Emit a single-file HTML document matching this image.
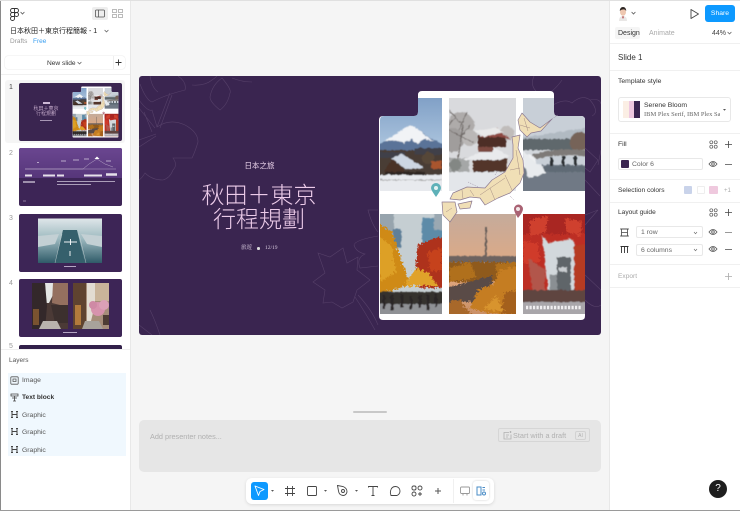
<!DOCTYPE html>
<html><head><meta charset="utf-8"><style>
html,body{margin:0;padding:0;background:#f5f5f5}
#r{position:relative;width:740px;height:511px;overflow:hidden;background:#f5f5f5;font-family:"Liberation Sans","Noto Sans CJK TC",sans-serif;color:#333}
.t{position:absolute;white-space:nowrap;font-size:6.800px;line-height:10px;color:#333;margin-top:1px}
.p{position:absolute;background:#fff}
.l{position:absolute;background:#e8e8e8;height:1px}
svg{position:absolute;display:block}
.th{position:absolute;left:19px;width:103px;height:58px;border-radius:2px;overflow:hidden;background:#3a2550}
.n{position:absolute;left:9px;font-size:7px;color:#999;line-height:10px}
</style></head><body><div id="r">

<svg width="0" height="0" style="position:absolute">
<defs>
<filter id="b" x="-10%" y="-10%" width="120%" height="120%"><feTurbulence type="fractalNoise" baseFrequency=".3" numOctaves="2" seed="3" result="n"/><feDisplacementMap in="SourceGraphic" in2="n" scale="3" xChannelSelector="R" yChannelSelector="G"/><feGaussianBlur stdDeviation=".4"/></filter>
<filter id="f" x="-10%" y="-10%" width="120%" height="120%"><feTurbulence type="fractalNoise" baseFrequency=".45" numOctaves="3" seed="8" result="n"/><feDisplacementMap in="SourceGraphic" in2="n" scale="7" xChannelSelector="R" yChannelSelector="G"/><feGaussianBlur stdDeviation=".35"/></filter>
<linearGradient id="sky1" x1="0" y1="0" x2="0" y2="1"><stop offset="0" stop-color="#7f9fc6"/><stop offset=".5" stop-color="#a9c2dc"/><stop offset="1" stop-color="#c8d6e3"/></linearGradient>
<linearGradient id="dusk" x1="0" y1="0" x2="0" y2="1"><stop offset="0" stop-color="#c4ab9c"/><stop offset=".6" stop-color="#e2a981"/><stop offset="1" stop-color="#c98f66"/></linearGradient>
<linearGradient id="rw" x1="0" y1="0" x2="0" y2="1"><stop offset="0" stop-color="#dfe6e9"/><stop offset=".45" stop-color="#9dbac0"/><stop offset="1" stop-color="#2f5a68"/></linearGradient>
<clipPath id="cp1"><path d="M380 191V120Q380 116 384 116H414Q418 116 418 112V98H442V191Z"/></clipPath>
<clipPath id="cp2"><rect x="449" y="98" width="67" height="93"/></clipPath>
<clipPath id="cp3"><path d="M523 98H554V112Q554 116 558 116H581Q585 116 585 120V191H523Z"/></clipPath>
<clipPath id="cp4"><rect x="380" y="214" width="62" height="100"/></clipPath>
<clipPath id="cp5"><rect x="449" y="214" width="67" height="100"/></clipPath>
<clipPath id="cp6"><rect x="523" y="214" width="62" height="100"/></clipPath>
<symbol id="col" viewBox="139 76 462 259">
<path d="M379 120Q379 116 383 116H414Q418 116 418 112V95Q418 91 422 91H550Q554 91 554 95V112Q554 116 558 116H581Q585 116 585 120V316Q585 320 581 320H383Q379 320 379 316Z" fill="#fff"/>
<g clip-path="url(#cp1)"><rect x="378" y="96" width="66" height="97" fill="url(#sky1)"/><g filter="url(#b)">
<path d="M376 146L395 136 406 127 411 125 418 129 428 137 446 146V158H376Z" fill="#5a7398"/>
<path d="M384 141L396 134 406 127 411 125 418 129 427 137 434 141 424 139 418 144 412 139 404 143 398 140Z" fill="#f1f3f6"/>
<rect x="376" y="150" width="70" height="27" fill="#4a3d36"/>
<path d="M376 152H405V158H376ZM414 148H446V155H414Z" fill="#3f3f48"/>
<circle cx="428" cy="158" r="6" fill="#574638"/>
<rect x="431" y="161" width="11" height="8" fill="#a9552e"/>
<path d="M391 158L402 154 424 168 405 169Z" fill="#cdd6e2"/>
<path d="M385 170L392 159 404 170V173H385Z" fill="#4a3227"/>
<rect x="376" y="175" width="70" height="20" fill="#e8eaee"/>
<path d="M380 180H442" stroke="#9a9a9a" stroke-width=".7"/>
<path d="M385 172H425V175H385Z" fill="#2f2622"/>
</g></g>
<g clip-path="url(#cp2)"><rect x="447" y="96" width="71" height="97" fill="#d9dadd"/><g filter="url(#b)">
<rect x="447" y="172" width="71" height="23" fill="#e3e6ea"/>
<circle cx="461" cy="125" r="13" fill="#aeabaa"/>
<circle cx="452" cy="140" r="12" fill="#a09d9c"/>
<circle cx="470" cy="138" r="8" fill="#bab7b6"/>
<circle cx="507" cy="133" r="7" fill="#c0bcba"/>
<path d="M449 110L463 125 458 160M467 112L459 130M449 130L474 143M455 118L449 125M470 125L462 135" stroke="#68625f" stroke-width=".9" fill="none"/>
<circle cx="455" cy="165" r="6" fill="#6a6e68"/>
<rect x="449" y="158" width="20" height="14" fill="#8e9290" opacity=".7"/>
<rect x="478" y="136" width="28" height="11" fill="#4d2e28"/>
<path d="M468 140L488 134 497 128 503 134 512 140 500 137H478Z" fill="#8f4a42"/>
<path d="M474 131L496 128 504 132 484 137Z" fill="#e9e9e9"/>
<rect x="473" y="158" width="34" height="14" fill="#52342c"/>
<path d="M463 160L482 151 492 147 510 156 500 160Z" fill="#e9eaec"/>
<rect x="478" y="147" width="15" height="5" fill="#7b4a3f"/>
</g></g>
<g clip-path="url(#cp3)"><rect x="521" y="96" width="66" height="97" fill="#c8cfd7"/><g filter="url(#b)">
<path d="M521 138Q545 134 587 128V152H521Z" fill="#b1bac2"/>
<rect x="521" y="139" width="66" height="12" fill="#5f686c"/>
<circle cx="580" cy="142" r="10" fill="#766358"/>
<rect x="519" y="165" width="70" height="30" fill="#6f7985"/>
<rect x="519" y="150" width="70" height="6" fill="#d3d7dc"/>
<path d="M532 155Q558 146 589 151V157Q558 152 532 160Z" fill="#7e7a78"/>
<path d="M550 157h3v10h-3zM562 156h3v10h-3zM574 156h3v10h-3z" fill="#2c2f33"/>
<rect x="533" y="166" width="56" height="6" fill="#5f6a74"/>
<circle cx="529" cy="162" r="7" fill="#eef0f3"/>
<circle cx="538" cy="170" r="6" fill="#e6e9ed"/>
<path d="M522 150L546 173 528 178Z" fill="#e8ebee"/>
</g></g>
<g clip-path="url(#cp4)"><rect x="378" y="212" width="66" height="104" fill="#c5ced2"/><g filter="url(#b)">
<rect x="376" y="210" width="18" height="32" fill="#97a4ad"/>
<rect x="393" y="229" width="8" height="18" fill="#5e7f98"/>
<rect x="422" y="218" width="24" height="36" fill="#5d8ba8"/>
<rect x="434" y="210" width="12" height="20" fill="#9aa8b2"/></g>
<g filter="url(#f)">
<path d="M376 222L392 232 402 262 410 284 376 296Z" fill="#cf8a16"/>
<path d="M378 236L392 246 396 272 380 282Z" fill="#dda026"/>
<path d="M417 246L430 240 446 236V288H420L416 270Z" fill="#ae331f"/>
<path d="M428 252L442 248V270L430 272Z" fill="#c6421f"/>
<path d="M404 286L416 268 428 272 438 286Z" fill="#e0a22b"/>
</g><g filter="url(#b)">
<rect x="376" y="292" width="70" height="14" fill="#35302f"/>
<rect x="376" y="304" width="70" height="12" fill="#8f9195"/>
<path d="M384 295v14M392 295v15M402 294v14M411 296v14M420 295v13M428 295v16M436 294v13" stroke="#2a2626" stroke-width="2.600"/>
</g></g>
<g clip-path="url(#cp5)"><rect x="447" y="212" width="71" height="104" fill="url(#dusk)"/><g filter="url(#b)">
<path d="M486 227V258" stroke="#5c5553" stroke-width="1.700"/>
<rect x="447" y="256" width="71" height="7" fill="#6d6460"/></g>
<g filter="url(#f)">
<rect x="445" y="262" width="75" height="20" fill="#8f5a1e"/>
<path d="M449 268L470 262 476 278 450 282ZM495 264L516 262V278H498Z" fill="#b0701f"/>
<path d="M445 288L492 276V302H445Z" fill="#5a4c47"/>
<path d="M490 314L470 308 478 290 494 284 500 270 520 266V316Z" fill="#c57d24"/>
<path d="M500 314L505 292 520 290V316Z" fill="#a4611e"/>
<path d="M445 316V302L460 300 472 316Z" fill="#a8682a"/>
<path d="M484 308L496 296 504 312Z" fill="#d8942e"/>
</g></g>
<g clip-path="url(#cp6)"><rect x="521" y="212" width="66" height="104" fill="#bd2e24"/><g filter="url(#f)">
<path d="M519 212H589V234H519Z" fill="#a92620"/>
<path d="M530 220L548 216 546 232 530 236ZM565 218L582 222 580 236 566 232Z" fill="#cf402e"/>
<path d="M523 240L538 244 540 262 523 264Z" fill="#d03a2b"/>
</g><g filter="url(#b)">
<path d="M542 236L549 243 570 239 574 240 578 292H548Z" fill="#d2d8dc"/>
<rect x="557" y="257" width="14" height="36" fill="#5e6569"/>
<rect x="559" y="267" width="8" height="5" fill="#c9cdd0"/>
<rect x="550" y="275" width="7" height="18" fill="#8a8f93"/>
<path d="M528 258L545 270V295H533Z" fill="#b2564c"/>
<rect x="574" y="245" width="13" height="48" fill="#b63a24"/>
<rect x="519" y="290" width="70" height="13" fill="#5f4540"/>
<rect x="519" y="302" width="70" height="14" fill="#a9a6aa"/>
</g>
<path d="M526 307.500h56" stroke="#f0eef0" stroke-width="3.500" stroke-dasharray="2.200 1.300"/></g>
<path d="M522 113L530 122 540 128 552 119 541 131 531 133 527 137 520 130 518 120ZM512 137L520 135 518 148 523 160 524 173 520 183 510 193 498 198 485 205 480 198 470 197 460 200 450 199 453 193 467 187 485 188 492 180 505 172 513 158 513 145ZM442 202L455 202 457 212 450 222 443 215ZM458 204L472 201 470 208 460 209Z" fill="#f0dfb6" stroke="#8c7a92" stroke-width=".7" stroke-linejoin="round"/>
<path d="M520 125L530 128M524 118L528 131M516 150L520 175M510 170L520 168M505 175L512 190M480 195L505 178M490 188L495 200M470 190L474 196M452 208L446 212M462 190L463 199" stroke="#a58d84" stroke-width=".5" fill="none"/>
<path d="M552 119L558 115M495 175L498 170M478 187L468 182M510 196L514 200" stroke="#8c7a92" stroke-width=".5" stroke-dasharray="1 1"/>
<path d="M436 197Q431 190 431 188A5 5 0 0 1 441 188Q441 190 436 197Z" fill="#5eb1b8"/><circle cx="436" cy="188" r="2" fill="#e4f3f3"/>
<path d="M518 218Q514 212 514 209A4.500 4.500 0 0 1 523 209Q523 212 518 218Z" fill="#a96273"/><circle cx="518" cy="209" r="2" fill="#f2e7e8"/>
</symbol>
</defs></svg>

<!-- left panel -->
<div class="p" style="left:0;top:0;width:130px;height:511px"></div>
<div class="l" style="left:130px;top:0;width:1px;height:511px"></div>
<svg style="left:10px;top:8px" width="9" height="13" viewBox="-.5 0 9 13" fill="none" stroke="#333" stroke-width=".9"><path d="M4 .5H2a2 2 0 0 0 0 4h2zM4 .5h2a2 2 0 0 1 0 4H4zM4 4.500H2a2 2 0 0 0 0 4h2zM2 8.500h2v2a2 2 0 1 1-2-2z"/><circle cx="6" cy="6.500" r="2"/></svg>
<svg style="left:20px;top:11px" width="5" height="4" viewBox="0 0 5 4"><path d="M.6 1L2.500 3 4.400 1" fill="none" stroke="#555" stroke-width=".8"/></svg>
<div style="position:absolute;left:92px;top:7px;width:16px;height:13px;background:#eee;border-radius:2px"></div>
<svg style="left:95px;top:9px" width="10" height="9" viewBox="0 0 10 9" fill="none" stroke="#555" stroke-width=".8"><rect x=".5" y="1" width="9" height="7" rx="1"/><path d="M3.500 1V8"/></svg>
<svg style="left:112px;top:9px" width="11" height="9" viewBox="0 0 11 9" fill="none" stroke="#aaa" stroke-width=".8"><rect x=".5" y=".5" width="4" height="3"/><rect x="6.500" y=".5" width="4" height="3"/><rect x=".5" y="5.500" width="4" height="3"/><rect x="6.500" y="5.500" width="4" height="3"/></svg>
<div class="t" style="left:10px;top:25.500px;font-size:7px;color:#222">日本秋田＋東京行程簡報 - 1</div>
<svg style="left:104px;top:29px" width="5" height="4" viewBox="0 0 5 4"><path d="M.6 1L2.500 3 4.400 1" fill="none" stroke="#555" stroke-width=".7"/></svg>
<div class="t" style="left:10px;top:36px;color:#999;font-size:6.500px">Drafts</div>
<div class="t" style="left:33px;top:36px;color:#3b9ff0;font-size:6.500px">Free</div>
<div style="position:absolute;left:5px;top:56px;width:120px;height:13px;border-radius:3px;box-shadow:0 0 0 .5px #ececec"></div>
<div class="t" style="left:47px;top:57.500px;font-size:6.600px">New slide</div>
<svg style="left:77px;top:61px" width="5" height="4" viewBox="0 0 5 4"><path d="M.6 1L2.500 3 4.400 1" fill="none" stroke="#555" stroke-width=".7"/></svg>
<div class="l" style="left:113px;top:56px;width:.5px;height:13px;background:#eee"></div>
<svg style="left:114px;top:58px" width="9" height="9" viewBox="0 0 9 9"><path d="M4.500 1.500V7.500M1.500 4.500H7.500" stroke="#333" stroke-width=".9"/></svg>
<div class="l" style="left:0;top:74px;width:130px;background:#f0f0f0"></div>
<div style="position:absolute;left:5px;top:80px;width:120px;height:63px;background:#f5f5f5;border-radius:3px"></div>

<div class="n" style="top:83px;color:#444">1</div>
<div class="th" style="top:83px">
<svg width="103" height="58" style="left:0;top:0"><use href="#col" width="103" height="58"/></svg>
<div style="position:absolute;left:0;width:54px;top:24px;text-align:center;color:#e4c9e6;font-size:5px;line-height:5.400px;font-weight:300">秋田＋東京<br>行程規劃</div>
<div style="position:absolute;left:24px;top:19px;width:7px;height:1.500px;background:#cdb9d6"></div>
<div style="position:absolute;left:21px;top:37px;width:12px;height:1px;background:#a897b5"></div>
</div>
<div class="n" style="top:149px">2</div>
<div class="th" style="top:148px;background:#3d2556">
<svg width="103" height="58" style="left:0;top:0" fill="none"><defs><linearGradient id="g2" x1="0" y1="0" x2="0" y2="1"><stop offset="0" stop-color="#6a4690"/><stop offset="1" stop-color="#56367a"/></linearGradient></defs><rect width="103" height="30" fill="url(#g2)"/>
<path d="M6 21H64L70 16 78 11 86 16 94 19" stroke="#cbbfd6" stroke-width=".4"/><path d="M6 21H97" stroke="#cbbfd6" stroke-width=".4"/>
<path d="M75.500 11L78 8.500 80.500 11Z" fill="#fff"/>
<path d="M18 14.500H20M42 13H47M54 12H60M65 11H70M87 13H92" stroke="#d6ccdf" stroke-width=".8"/>
<path d="M6 27.500H13M24 27.500H36M38 27.500H45M65 27.500H83" stroke="#e6e0ea" stroke-width="2"/><path d="M87 26.500H98" stroke="#e6e0ea" stroke-width="2.500"/>
<path d="M4 34H16" stroke="#d8d0e0" stroke-width="1.200"/><path d="M38 33.500H96M38 36.500H72" stroke="#d0c6da" stroke-width=".8"/><path d="M4 53H7" stroke="#a898b8" stroke-width=".7"/></svg>
</div>
<div class="n" style="top:214px">3</div>
<div class="th" style="top:214px;background:#3d2556">
<svg width="103" height="58" style="left:0;top:0"><rect x="19" y="4.500" width="64" height="44.500" fill="url(#rw)"/><path d="M44 16H58L66 49H36Z" fill="#35606c"/><path d="M19 22L40 20 36 30 19 33ZM83 22L62 20 68 30 83 33Z" fill="#c3d0d4"/><path d="M45 28H58M51.500 25V31" stroke="#eef2f4" stroke-width="1"/><path d="M51 37V42" stroke="#fff" stroke-width=".9"/><path d="M43 20L36 49M60 20L67 49" stroke="#d5dcdc" stroke-width=".4"/><rect x="45" y="52" width="12" height="1" fill="#b5a7c4"/></svg>
</div>
<div class="n" style="top:279px">4</div>
<div class="th" style="top:279px;background:#3d2556">
<svg width="103" height="58" style="left:0;top:0"><rect x="13" y="4" width="36" height="46" fill="#4b3a36"/><path d="M26 4H34V16L30 24H27Z" fill="#e4e6e4"/><path d="M13 4H26L28 27 26 50H13Z" fill="#33282a"/><path d="M14 30H20V46H14Z" fill="#7a5330"/><path d="M34 4H49V28L33 24Z" fill="#94705f"/><path d="M32 26H49V44H36Z" fill="#3c302e"/><path d="M24 42H38L42 50H20Z" fill="#b9b3ad"/>
<rect x="54" y="4" width="36" height="46" fill="#a68e7a"/><path d="M54 4H67V50H54Z" fill="#5f4330"/><path d="M56 26H62V46H56Z" fill="#b27a3c"/><path d="M68 4H76V26L72 42 68 42Z" fill="#e2dcd2"/><path d="M76 4H90V22H76Z" fill="#c9b49a"/><circle cx="79" cy="30" r="7" fill="#d793ad"/><circle cx="85" cy="26" r="5" fill="#dba0b6"/><circle cx="74" cy="26" r="4" fill="#cf8aa5"/><path d="M84 36H90V46H84Z" fill="#4e3d35"/><path d="M66 42H80L84 50H63Z" fill="#a8a29b"/><rect x="44" y="53" width="14" height="1" fill="#b5a7c4"/></svg>
</div>
<div class="n" style="top:342px">5</div>
<div class="th" style="top:345px;height:5px;border-radius:2px 2px 0 0;background:#32204a"></div>
<div style="position:absolute;left:0;top:349px;width:130px;height:162px;background:#fff"></div>
<div class="l" style="left:0;top:349px;width:130px;background:#f0f0f0"></div>
<div class="t" style="left:9px;top:355px;font-size:6.500px;color:#555">Layers</div>
<div style="position:absolute;left:8px;top:373px;width:118px;height:83px;background:#f0f8fe"></div>
<svg style="left:10px;top:376px" width="9" height="9" viewBox="0 0 9 9" fill="none" stroke="#555" stroke-width=".8"><rect x=".8" y=".8" width="7.400" height="7.400" rx="1"/><path d="M3 5.500H6V3H3Z"/></svg>
<div class="t" style="left:22px;top:375px;color:#555">Image</div>
<svg style="left:10px;top:393px" width="9" height="9" viewBox="0 0 9 9" fill="none" stroke="#444" stroke-width=".8"><path d="M1 1H8V3H1ZM2 5H7M4.500 3V8M3 8H6"/></svg>
<div class="t" style="left:22px;top:392px;font-weight:bold;color:#333;font-size:6.600px">Text block</div>
<svg style="left:10px;top:410px" width="9" height="9" viewBox="0 0 9 9" fill="none" stroke="#444" stroke-width="1"><path d="M2 1.500V7.500M7 1.500V7.500M2 4.500H7M1 1.500H3M6 1.500H8M1 7.500H3M6 7.500H8"/></svg>
<div class="t" style="left:22px;top:409.500px;color:#555">Graphic</div>
<svg style="left:10px;top:427px" width="9" height="9" viewBox="0 0 9 9" fill="none" stroke="#444" stroke-width="1"><path d="M2 1.500V7.500M7 1.500V7.500M2 4.500H7M1 1.500H3M6 1.500H8M1 7.500H3M6 7.500H8"/></svg>
<div class="t" style="left:22px;top:427px;color:#555">Graphic</div>
<svg style="left:10px;top:445px" width="9" height="9" viewBox="0 0 9 9" fill="none" stroke="#444" stroke-width="1"><path d="M2 1.500V7.500M7 1.500V7.500M2 4.500H7M1 1.500H3M6 1.500H8M1 7.500H3M6 7.500H8"/></svg>
<div class="t" style="left:22px;top:444.500px;color:#555">Graphic</div>

<!-- slide -->
<svg style="left:139px;top:76px" width="462" height="259" viewBox="139 76 462 259">
<rect x="139" y="76" width="462" height="259" rx="3" fill="#3a2550"/>
<g fill="none" stroke="#564069" stroke-width=".6">
<path d="M139 100Q148 112 152 110L157 127 Q170 118 185 125 198 132 198 142 195 152 192 158 176 158 173 158 178 165 173 170 170 178 163 180 152 180 145 173 142 178 139 180"/>
<path d="M170 93L157 127M172 95L160 128M139 108Q150 122 155 128M144 112L152 132M139 140L156 134M139 147L156 136"/>
<path d="M140 84Q146 100 152 102 165 95 185 90 187 82 178 76M150 76Q152 88 158 92"/>
<path d="M192 85Q205 86 212 80 215 78 217 76M222 78Q232 90 230 93 228 104 220 110 210 102 210 97 212 85 222 78ZM232 78Q242 82 252 82"/>
<path d="M318 253L330 257 343 248 347 263 358 257 357 270 370 280 357 290 353 302 342 308 332 302 323 303 325 290 313 282 325 273Z"/>
<path d="M355 297Q365 312 375 330M358 295Q372 310 378 325"/>
<path d="M378 210L368 210Q372 225 378 232M378 236Q355 240 354 245 356 252 365 254 356 258 360 268L378 266"/>
<path d="M534 76Q530 85 536 91M562 80Q558 86 552 91M553 105Q565 98 572 103 582 94 590 100 600 98 601 104M590 100Q600 112 592 116"/>
<path d="M585 148L598 160 590 172 585 168M585 180L600 196M598 165L601 150M585 225L598 210 585 215M585 275L601 290M585 300Q595 310 601 305"/>
<path d="M139 325L152 335M150 310Q155 320 160 335"/>
</g>
<use href="#col" x="139" y="76" width="462" height="259"/>
</svg>
<div style="position:absolute;left:139px;width:240px;top:160.500px;text-align:center;color:#ead3ea;font-size:7.500px;line-height:10px;padding-left:.5px">日本之旅</div>
<div style="position:absolute;left:139px;width:240px;top:183px;text-align:center;color:#eccbe9;font-size:23px;line-height:24px;font-weight:300">秋田＋東京<br>行程規劃</div>
<div style="position:absolute;left:241px;top:243px;color:#d5c7dc;font-size:5.500px;line-height:10px;font-family:'Liberation Serif','Noto Serif CJK SC',serif">旅遊</div>
<div style="position:absolute;left:257px;top:247px;width:2.500px;height:2.500px;border-radius:50%;background:#ddd"></div>
<div style="position:absolute;left:265px;top:243px;color:#d5c7dc;font-size:5.500px;line-height:10px;font-family:'Liberation Serif',serif">12/19</div>

<!-- notes -->
<div style="position:absolute;left:353px;top:411px;width:34px;height:2px;background:#c8c8c8;border-radius:1px"></div>
<div style="position:absolute;left:139px;top:420px;width:462px;height:52px;background:#e6e6e6;border-radius:5px"></div>
<div class="t" style="left:150px;top:431px;color:#b0b0b0;font-size:7.300px">Add presenter notes...</div>
<div style="position:absolute;left:498px;top:428px;width:92px;height:14px;border:.7px solid #d6d6d6;border-radius:2px;box-sizing:border-box"></div>
<svg style="left:503px;top:431px" width="9" height="9" viewBox="0 0 9 9" fill="none" stroke="#b0b0b0" stroke-width=".8"><path d="M6 1.500H1V8H8V3.500M3 4H6M3 6H5M7.500 0V2M6.500 1H8.500"/></svg>
<div class="t" style="left:513px;top:430px;color:#b0b0b0;font-size:7.300px">Start with a draft</div>
<div style="position:absolute;left:575px;top:431px;width:11px;height:9px;border:.5px solid #d2d2d2;border-radius:2px;box-sizing:border-box;font-size:5px;line-height:8px;color:#b0b0b0;text-align:center">AI</div>

<!-- toolbar -->
<div style="position:absolute;left:246px;top:478px;width:248px;height:26px;background:#fff;border-radius:6px;box-shadow:0 1px 3px rgba(0,0,0,.12)"></div>
<div style="position:absolute;left:251px;top:482px;width:17px;height:18px;background:#0d99ff;border-radius:3px"></div>
<svg style="left:251px;top:482px" width="17" height="18" viewBox="0 0 17 18"><path d="M4 4L13 7.500 9 9.500 7.500 13.500Z" fill="none" stroke="#fff" stroke-width=".9" stroke-linejoin="round"/></svg>
<svg style="left:270px;top:489px" width="5" height="4"><path d="M1 1L2.500 2.800 4 1Z" fill="#555"/></svg>
<svg style="left:284px;top:485px" width="12" height="12" viewBox="0 0 12 12" stroke="#444" stroke-width=".9"><path d="M3.500 1V11M8.500 1V11M1 3.500H11M1 8.500H11"/></svg>
<svg style="left:306px;top:485px" width="12" height="12" viewBox="0 0 12 12"><rect x="1.500" y="1.500" width="9" height="9" rx="1" fill="none" stroke="#444" stroke-width=".9"/></svg>
<svg style="left:323px;top:489px" width="5" height="4"><path d="M1 1L2.500 2.800 4 1Z" fill="#555"/></svg>
<svg style="left:336px;top:484px" width="13" height="13" viewBox="0 0 13 13" fill="none" stroke="#444" stroke-width=".9"><path d="M1.500 1.500L7 2.500Q11 4 11 8 10 11.500 7 11.500 3 11 2.500 7Z"/><circle cx="7" cy="7" r="1.500"/></svg>
<svg style="left:354px;top:489px" width="5" height="4"><path d="M1 1L2.500 2.800 4 1Z" fill="#555"/></svg>
<svg style="left:367px;top:485px" width="12" height="12" viewBox="0 0 12 12" fill="none" stroke="#444" stroke-width=".9"><path d="M1.500 2.500V1.500H10.500V2.500M6 1.500V10.500M4.500 10.500H7.500"/></svg>
<svg style="left:389px;top:485px" width="12" height="12" viewBox="0 0 12 12" fill="none" stroke="#444" stroke-width=".9"><path d="M6.500 1.500A4.500 4.500 0 0 1 11 6Q11 9 8 10.500H2Q1 8 1.500 6 2.500 1.500 6.500 1.500Z"/></svg>
<svg style="left:411px;top:485px" width="12" height="12" viewBox="0 0 12 12" fill="none" stroke="#444" stroke-width=".9"><rect x="1" y="1" width="4" height="4" rx="1.500"/><rect x="7" y="1" width="4" height="4" rx="2"/><rect x="1" y="7" width="4" height="4" rx="2"/><path d="M9 7V11M7 9H11"/></svg>
<svg style="left:432px;top:485px" width="12" height="12" viewBox="0 0 12 12"><path d="M6 3V9M3 6H9" stroke="#555" stroke-width="1"/></svg>
<div style="position:absolute;left:453px;top:479px;width:.7px;height:24px;background:#f0f0f0"></div>
<svg style="left:459px;top:485px" width="12" height="12" viewBox="0 0 12 12" fill="none" stroke="#999" stroke-width=".9"><rect x="1.500" y="2" width="9" height="6.500" rx="1"/><path d="M4 8.500V10.500M8 8.500V10.500"/></svg>
<div style="position:absolute;left:473px;top:481px;width:16px;height:19px;background:#fff;border-radius:3px;box-shadow:0 0 2px rgba(0,0,0,.2)"></div>
<svg style="left:475px;top:485px" width="12" height="12" viewBox="0 0 12 12" fill="none" stroke="#4a8cc7" stroke-width="1"><path d="M2 2H6V10H2ZM7.500 2.500H10M7.500 5H10"/><circle cx="9" cy="8.500" r="1.500"/></svg>

<!-- right panel -->
<div class="p" style="left:610px;top:0;width:130px;height:511px"></div>
<div class="l" style="left:609px;top:0;width:1px;height:511px"></div>
<svg style="left:617px;top:6px" width="12" height="15" viewBox="0 0 12 15"><path d="M2 15Q2 10 6 10 10 10 10 15Z" fill="#e9e7e6"/><path d="M5 10.500H7L6 13Z" fill="#b23b3b"/><ellipse cx="6" cy="6" rx="3" ry="3.800" fill="#eec7b0"/><path d="M2.800 5Q3 1 6 1 9 1 9.200 5 8 3 6 3.500 4 3.500 2.800 5Z" fill="#2b2320"/></svg>
<svg style="left:631px;top:11px" width="5" height="4" viewBox="0 0 5 4"><path d="M.6 1L2.500 3 4.400 1" fill="none" stroke="#555" stroke-width=".8"/></svg>
<svg style="left:689px;top:8px" width="11" height="12" viewBox="0 0 11 12"><path d="M2 1.500L9.500 6 2 10.500Z" fill="none" stroke="#444" stroke-width=".9" stroke-linejoin="round"/></svg>
<div style="position:absolute;left:705px;top:5px;width:30px;height:17px;background:#0d99ff;border-radius:3px;color:#fff;font-size:6.800px;line-height:17px;text-align:center">Share</div>
<div style="position:absolute;left:615px;top:27px;width:25px;height:12px;background:#f5f5f5;border-radius:2px"></div>
<div class="t" style="left:618px;top:28px;color:#333;font-size:7px">Design</div>
<div class="t" style="left:649px;top:28px;color:#aaa;font-size:7px">Animate</div>
<div class="t" style="left:712px;top:28px;color:#444;font-size:7px">44%</div>
<svg style="left:727px;top:31px" width="5" height="4" viewBox="0 0 5 4"><path d="M.6 1L2.500 3 4.400 1" fill="none" stroke="#555" stroke-width=".7"/></svg>
<div class="l" style="left:610px;top:43px;width:130px;background:#f0f0f0"></div>
<div class="t" style="left:618px;top:51.500px;font-size:8px">Slide 1</div>
<div class="l" style="left:610px;top:70px;width:130px;background:#f0f0f0"></div>
<div class="t" style="left:618px;top:76px">Template style</div>
<div style="position:absolute;left:618px;top:97px;width:113px;height:25px;border:.5px solid #e8e8e8;border-radius:3px;box-sizing:border-box"></div>
<div style="position:absolute;left:623px;top:101px;width:6px;height:17px;background:#fbeee4"></div>
<div style="position:absolute;left:629px;top:101px;width:5px;height:17px;background:#eec8e0"></div>
<div style="position:absolute;left:634px;top:101px;width:6px;height:17px;background:#3a2550"></div>
<div class="t" style="left:644px;top:99.500px">Serene Bloom</div>
<div style="position:absolute;left:644px;top:110px;width:76px;overflow:hidden;white-space:nowrap;font-family:'Liberation Serif',serif;font-size:6.500px;line-height:10px;color:#666">IBM Plex Serif, IBM Plex Sans</div>
<svg style="left:722px;top:108px" width="5" height="4"><path d="M1 1L2.500 2.800 4 1Z" fill="#555"/></svg>
<div class="l" style="left:610px;top:133px;width:130px;background:#f0f0f0"></div>
<div class="t" style="left:618px;top:139px">Fill</div>
<svg style="left:709px;top:140px" width="9" height="9" viewBox="0 0 9 9" fill="none" stroke="#555" stroke-width=".7"><circle cx="2.300" cy="2.300" r="1.500"/><circle cx="6.700" cy="2.300" r="1.500"/><circle cx="2.300" cy="6.700" r="1.500"/><circle cx="6.700" cy="6.700" r="1.500"/></svg>
<svg style="left:724px;top:140px" width="9" height="9" viewBox="0 0 9 9"><path d="M4.500 1V8M1 4.500H8" stroke="#444" stroke-width=".8"/></svg>
<div style="position:absolute;left:618px;top:158px;width:85px;height:12px;border:.5px solid #e8e8e8;border-radius:2px;box-sizing:border-box"></div>
<div style="position:absolute;left:621px;top:160px;width:8px;height:8px;background:#3a2550;border-radius:1px"></div>
<div class="t" style="left:632px;top:158.500px;color:#666">Color 6</div>
<svg style="left:708px;top:160px" width="10" height="8" viewBox="0 0 10 8" fill="none" stroke="#555" stroke-width=".8"><path d="M1 4Q5 -1 9 4 5 9 1 4Z"/><circle cx="5" cy="4" r="1.300"/></svg>
<div class="l" style="left:725px;top:164px;width:7px;background:#777"></div>
<div class="l" style="left:610px;top:179px;width:130px;background:#f0f0f0"></div>
<div class="t" style="left:618px;top:185px;font-size:6.600px">Selection colors</div>
<div style="position:absolute;left:684px;top:186px;width:8px;height:8px;background:#c9d3ea;border-radius:1px"></div>
<div style="position:absolute;left:697px;top:186px;width:8px;height:8px;background:#fff;border:.5px solid #eee;border-radius:1px;box-sizing:border-box"></div>
<div style="position:absolute;left:709px;top:186px;width:9px;height:8px;background:#efc9de;border-radius:1px"></div>
<div class="t" style="left:724px;top:184.500px;color:#aaa;font-size:6px">+1</div>
<div class="l" style="left:610px;top:202px;width:130px;background:#f0f0f0"></div>
<div class="t" style="left:618px;top:207px;font-size:6.600px">Layout guide</div>
<svg style="left:709px;top:208px" width="9" height="9" viewBox="0 0 9 9" fill="none" stroke="#555" stroke-width=".7"><circle cx="2.300" cy="2.300" r="1.500"/><circle cx="6.700" cy="2.300" r="1.500"/><circle cx="2.300" cy="6.700" r="1.500"/><circle cx="6.700" cy="6.700" r="1.500"/></svg>
<svg style="left:724px;top:208px" width="9" height="9" viewBox="0 0 9 9"><path d="M4.500 1V8M1 4.500H8" stroke="#444" stroke-width=".8"/></svg>
<svg style="left:620px;top:228px" width="9" height="9" viewBox="0 0 9 9" fill="none" stroke="#444" stroke-width=".8"><rect x="1.500" y="1" width="6" height="7"/><path d="M1.500 4.500H7.500M0 1H9M0 8H9"/></svg>
<div style="position:absolute;left:636px;top:226px;width:67px;height:12px;border:.5px solid #e8e8e8;border-radius:2px;box-sizing:border-box"></div>
<div class="t" style="left:641px;top:226.500px;color:#666">1 row</div>
<svg style="left:693px;top:231px" width="5" height="4"><path d="M1 1L2.500 2.800 4 1" fill="none" stroke="#666" stroke-width=".6"/></svg>
<svg style="left:708px;top:228px" width="10" height="8" viewBox="0 0 10 8" fill="none" stroke="#555" stroke-width=".8"><path d="M1 4Q5 -1 9 4 5 9 1 4Z"/><circle cx="5" cy="4" r="1.300"/></svg>
<div class="l" style="left:725px;top:232px;width:7px;background:#999"></div>
<svg style="left:620px;top:245px" width="9" height="9" viewBox="0 0 9 9" stroke="#333" stroke-width=".9" fill="none"><path d="M1.500 1.500V8M4.500 1.500V8M7.500 1.500V8M.5 1.500H8.500"/></svg>
<div style="position:absolute;left:636px;top:244px;width:67px;height:12px;border:.5px solid #e8e8e8;border-radius:2px;box-sizing:border-box"></div>
<div class="t" style="left:641px;top:244.500px;color:#666">6 columns</div>
<svg style="left:693px;top:248px" width="5" height="4"><path d="M1 1L2.500 2.800 4 1" fill="none" stroke="#666" stroke-width=".6"/></svg>
<svg style="left:708px;top:245px" width="10" height="8" viewBox="0 0 10 8" fill="none" stroke="#555" stroke-width=".8"><path d="M1 4Q5 -1 9 4 5 9 1 4Z"/><circle cx="5" cy="4" r="1.300"/></svg>
<div class="l" style="left:725px;top:249px;width:7px;background:#777"></div>
<div class="l" style="left:610px;top:264px;width:130px;background:#f0f0f0"></div>
<div class="t" style="left:618px;top:271px;color:#aaa;font-size:6.600px">Export</div>
<svg style="left:724px;top:272px" width="9" height="9" viewBox="0 0 9 9"><path d="M4.500 1V8M1 4.500H8" stroke="#aaa" stroke-width=".8"/></svg>
<div class="l" style="left:610px;top:287px;width:130px;background:#f0f0f0"></div>
<div style="position:absolute;left:709px;top:480px;width:18px;height:18px;border-radius:50%;background:#1e1e1e;color:#fff;font-size:10px;line-height:18px;text-align:center">?</div>

<!-- frame lines -->
<div style="position:absolute;left:0;top:0;width:1px;height:511px;background:#8a8a8a"></div>
<div style="position:absolute;left:0;top:510px;width:740px;height:1px;background:#9a9a9a"></div>
<div style="position:absolute;left:0;top:0;width:740px;height:1px;background:#e0e0e0"></div>
</div></body></html>
